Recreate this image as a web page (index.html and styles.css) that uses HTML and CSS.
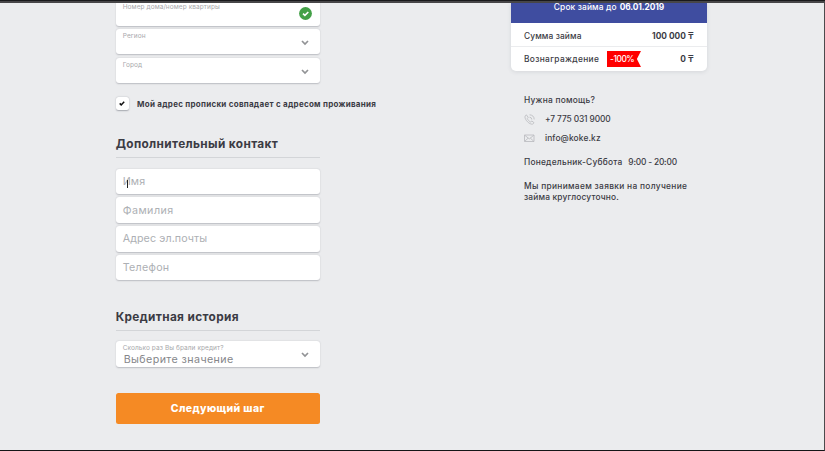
FILE: index.html
```
<!DOCTYPE html>
<html lang="ru">
<head>
<meta charset="utf-8">
<title>Анкета</title>
<link rel="stylesheet" href="styles.css">
</head>
<body>
<main class="page">
  <form class="form">
    <div class="group">
      <div class="field"><span class="label t-house">Номер дома/номер квартиры</span>
        <svg class="ok" viewBox="0 0 13 13"><circle cx="6.5" cy="6.5" r="6.4" fill="#43a047"/><path d="M4 6.6l1.9 1.8L9.3 5" fill="none" stroke="#fff" stroke-width="1.6"/></svg>
      </div>
      <div class="field"><span class="label t-region">Регион</span>
        <svg class="arrow" viewBox="0 0 8 6"><path d="M1 1l3 3 3-3" /></svg>
      </div>
      <div class="field"><span class="label t-city">Город</span>
        <svg class="arrow" viewBox="0 0 8 6"><path d="M1 1l3 3 3-3" /></svg>
      </div>
    </div>
    <div class="agree">
      <span class="box"><svg viewBox="0 0 6 5"><path d="M.7 2.4l1.5 1.5L5.2.8"/></svg></span>
      <span class="agree-text">Мой адрес прописки совпадает с адресом проживания</span>
    </div>
    <h2 class="title t-contact">Дополнительный контакт</h2>
    <div class="group">
      <div class="field"><span class="hint t-name">Имя</span><i class="caret"></i></div>
      <div class="field"><span class="hint t-surname">Фамилия</span></div>
      <div class="field"><span class="hint t-mail">Адрес эл.почты</span></div>
      <div class="field"><span class="hint t-phone">Телефон</span></div>
    </div>
    <h2 class="title t-history">Кредитная история</h2>
    <div class="field select"><span class="label t-times">Сколько раз Вы брали кредит?</span><span class="value">Выберите значение</span>
      <svg class="arrow" viewBox="0 0 8 6"><path d="M1 1l3 3 3-3" /></svg>
    </div>
    <div class="submit"><span>Следующий шаг</span></div>
  </form>
  <aside class="side">
    <section class="card">
      <header class="term"><span class="t-term">Срок займа до</span><b class="t-date">06.01.2019</b></header>
      <div class="row first"><span class="t-sum">Сумма займа</span><b class="t-amount">100 000 ₸</b></div>
      <div class="row"><span class="t-fee">Вознаграждение</span><span class="badge"><span>-100%</span></span><b class="t-zero">0 ₸</b></div>
    </section>
    <section class="help">
      <div class="line"><span class="t-help">Нужна помощь?</span></div>
      <div class="line tel"><svg class="icon" viewBox="0 0 11 11"><path d="M2.4.9L1 2.2C.5 4.600 3.500 9.300 7.800 10.200 8.800 10.300 9.700 9.600 10 8.700L7.900 7 6.700 8C5.200 7.400 3.900 6 3.300 4.500L4.200 3.300zM5.500 3.200Q7.700 3.300 7.800 5.500M5.600.8Q10 1.100 10.200 5.400"/></svg><span class="t-tel">+7 775 031 9000</span></div>
      <div class="line mail"><svg class="icon" viewBox="0 0 11 11"><path d="M.5 2h9.500v6.500H.5zM.8 2.300l4.500 3.600 4.400-3.600M.8 8.200l3.300-3M9.700 8.200L6.400 5.200"/></svg><span class="t-email">info@koke.kz</span></div>
      <div class="line hours"><span class="t-days">Понедельник-Суббота</span><span class="t-time">9:00 - 20:00</span></div>
      <p class="note"><span class="t-note1">Мы принимаем заявки на получение</span><br><span class="t-note2">займа круглосуточно.</span></p>
    </section>
  </aside>
</main>
</body>
</html>
```
FILE: styles.css
```
* { box-sizing: border-box; }
body {
  margin: 0;
  background: #ebecee;
  color: #3b3b44;
  font: 500 8.4px/12px Inter, "Open Sans", sans-serif;
}
.page {
  width: 825px;
  height: 451px;
  overflow: hidden;
  border-top: 3px solid #474648;
  border-right: 1px solid #4b4a4c;
  border-bottom: 1px solid #151517;
  display: flex;
  align-items: flex-start;
  padding-left: 115.700px;
  white-space: nowrap;
  background: #ebecee;
}
.page::before {
  content: "";
  position: absolute;
  top: 0;
  left: 0;
  width: 825px;
  height: 1px;
  background: #19191b;
}
.form { width: 204px; }
.group { display: grid; gap: 3.3px; }
.field {
  position: relative;
  height: 25.500px;
  padding-left: 7px;
  border-radius: 3px;
  background: #fff;
  box-shadow: 0 .5px 1.500px rgba(60, 65, 80, .28);
  display: flex;
  align-items: center;
}
.form > .group:first-child { margin-top: -3px; }
.label {
  align-self: flex-start;
  margin-top: 3px;
  font-size: 6.500px;
  font-weight: 400;
  line-height: 8px;
  letter-spacing: .08px;
  color: #a7a8ab;
}
.hint { padding-top: 1px; font-size: 10.700px; font-weight: 400; color: #adb0b4; }
.t-name { letter-spacing: .1px; }
.t-surname { letter-spacing: .45px; }
.t-mail { letter-spacing: .1px; }
.t-phone { letter-spacing: .28px; }
.caret { position: absolute; left: 11.300px; top: 11px; width: 1px; height: 8px; background: #222; }
.arrow, .ok { position: absolute; overflow: visible; }
.arrow { right: 10.500px; top: 11px; width: 8px; height: 6px; }
.arrow path { fill: none; stroke: #929396; stroke-width: 1.700; }
.ok { right: 7.500px; top: 6.500px; width: 13px; height: 13px; }
.agree { display: flex; align-items: center; gap: 8.300px; height: 13px; margin-top: 14px; }
.box {
  flex: none;
  width: 13px;
  height: 13px;
  border-radius: 2.500px;
  background: #fff;
  box-shadow: 0 .5px 1.500px rgba(60, 65, 80, .4);
  display: flex;
  align-items: center;
  justify-content: center;
}
.box svg { width: 6px; height: 5px; }
.box path { fill: none; stroke: #111; stroke-width: 1.500; }
.agree-text { font-weight: 700; font-size: 8px; letter-spacing: .27px; }
.title {
  margin: 26px 0 10.500px;
  height: 22px;
  padding-bottom: 6px;
  border-bottom: 1px solid #d3d5d8;
  font-size: 11.800px;
  line-height: 16px;
  font-weight: 700;
  letter-spacing: .37px;
}
.t-history { margin-top: 28.500px; }
.select { align-items: flex-start; flex-direction: column; }
.value { margin: 2px 0 0 1px; font-size: 10.700px; line-height: 12px; font-weight: 400; letter-spacing: .4px; color: #85868a; }
.submit {
  height: 30.500px;
  margin-top: 26.500px;
  border-radius: 2.500px;
  background: #f58a24;
  color: #fff;
  font-size: 10.500px;
  font-weight: 800;
  letter-spacing: .4px;
  display: flex;
  align-items: center;
  justify-content: center;
}
.side { width: 196px; margin-left: 191.300px; }
.card { height: 68px; border-radius: 0 0 5px 5px; background: #fff; box-shadow: 0 1px 4px rgba(60, 65, 80, .12); overflow: hidden; }
.term { height: 20px; background: #3f4da0; color: #fff; display: flex; justify-content: center; gap: 3px; line-height: 8px; }
.t-term { letter-spacing: .12px; }
.t-date { letter-spacing: -.1px; }
.row { display: flex; align-items: center; height: 24px; padding: 0 13.500px 0 13px; }
.first { padding-top: 2px; border-bottom: 1px solid #ebecee; }
.row b { margin-left: auto; }
.t-sum { letter-spacing: .1px; }
.t-fee { width: 75.500px; letter-spacing: .33px; }
.badge {
  width: 34px;
  height: 16px;
  margin-left: 7.500px;
  padding-left: 3px;
  background: #f00;
  color: #fff;
  line-height: 16px;
  letter-spacing: -.45px;
  clip-path: polygon(0 0, 100% 0, 88% 50%, 100% 100%, 0 100%);
}
.help { padding: 23px 0 0 13px; }
.line { display: flex; align-items: center; height: 12px; }
.icon { width: 11px; height: 11px; margin-right: 10px; }
.icon path { fill: none; stroke: #b7b9bd; stroke-width: .8; }
.tel { margin-top: 7px; }
.mail { margin-top: 7px; }
.hours { margin-top: 12px; }
.t-help { letter-spacing: .23px; }
.t-tel { letter-spacing: -.11px; }
.t-email { letter-spacing: .12px; }
.t-days { letter-spacing: .22px; }
.t-time { margin-left: 6px; letter-spacing: -.2px; }
.note { margin: 13px 0 0; line-height: 11px; }
.t-note1 { letter-spacing: .31px; }
.t-note2 { letter-spacing: .15px; }
```
